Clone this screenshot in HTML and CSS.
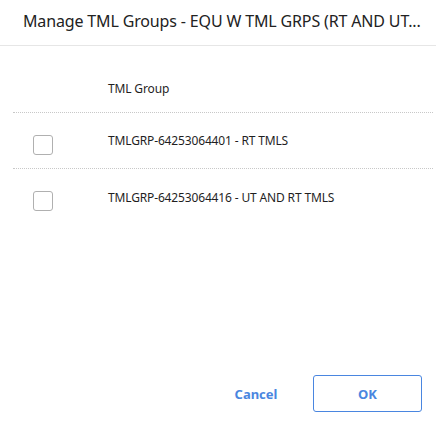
FILE: index.html
```html
<!DOCTYPE html>
<html>
<head>
<meta charset="utf-8">
<link rel="stylesheet" href="styles.css">
</head>
<body>
<div class="dialog">
  <div class="header">
    <div class="title">Manage TML Groups - EQU W TML GRPS (RT AND UT...</div>
  </div>
  <div class="content">
    <div class="row head">
      <div class="cell-check"></div>
      <div class="cell-text">TML Group</div>
    </div>
    <div class="row">
      <div class="cell-check"><span class="checkbox"></span></div>
      <div class="cell-text">TMLGRP-64253064401 - RT TMLS</div>
    </div>
    <div class="row last">
      <div class="cell-check"><span class="checkbox"></span></div>
      <div class="cell-text">TMLGRP-64253064416 - UT AND RT TMLS</div>
    </div>
  </div>
  <div class="footer">
    <button class="btn btn-text">Cancel</button>
    <button class="btn btn-outline">OK</button>
  </div>
</div>
</body>
</html>
```
FILE: styles.css
```css
html, body {
  margin: 0;
  padding: 0;
  background: #ffffff;
}
body {
  font-family: "Noto Sans", "Open Sans", sans-serif;
  color: #1f1f1f;
}
.dialog {
  width: 436px;
  height: 429px;
  display: flex;
  flex-direction: column;
  box-sizing: border-box;
}
.header {
  height: 46px;
  border-bottom: 1px solid #e6e6e6;
  box-sizing: border-box;
  padding: 9px 0 0 23px;
}
.title {
  font-size: 16px;
  line-height: 24px;
  letter-spacing: -0.15px;
  white-space: nowrap;
  color: #222222;
}
.content {
  flex: 1;
  padding: 21px 3px 0 13px;
}
.row {
  display: flex;
  align-items: center;
  height: 56px;
  border-bottom: 1px dotted #c8c8c8;
  box-sizing: border-box;
}
.row.head {
  height: 46px;
  padding-bottom: 2px;
}
.row.last {
  border-bottom: none;
}
.cell-check {
  width: 95px;
  display: flex;
  padding-left: 20px;
  box-sizing: border-box;
}
.cell-text {
  font-size: 12px;
  letter-spacing: -0.15px;
  color: #1f1f1f;
}
.checkbox {
  width: 18px;
  height: 18px;
  border: 1px solid #b0b0b0;
  border-radius: 3px;
  margin-top: 8px;
}
.footer {
  display: flex;
  justify-content: flex-end;
  align-items: center;
  gap: 12px;
  padding: 0 14px 17px 0;
}
.btn {
  font-family: "Noto Sans", "Open Sans", sans-serif;
  font-size: 13px;
  font-weight: bold;
  color: #4a86e0;
  background: #ffffff;
  height: 37px;
  cursor: pointer;
}
.btn-text {
  border: none;
  width: 90px;
}
.btn-outline {
  width: 109px;
  border: 1px solid #4a86e0;
  border-radius: 3px;
}
```
